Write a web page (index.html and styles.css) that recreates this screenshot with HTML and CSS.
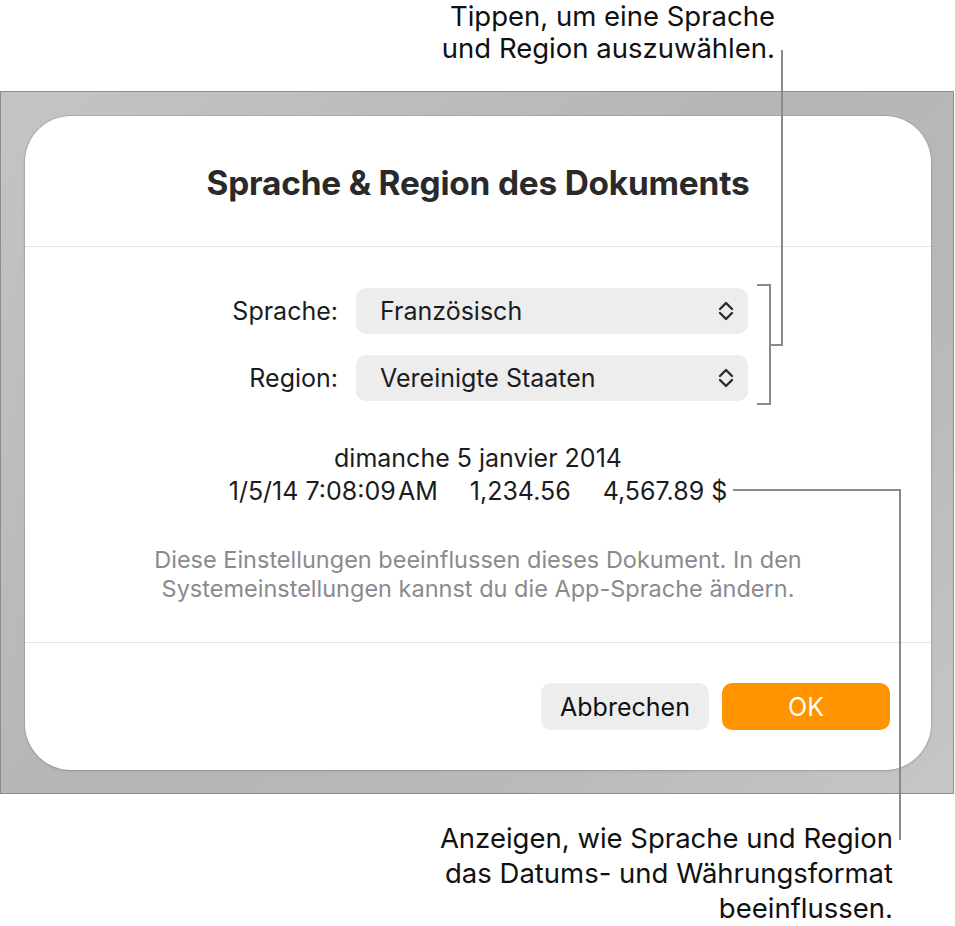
FILE: index.html
```html
<!DOCTYPE html>
<html lang="de">
<head>
    <meta charset="UTF-8" />
    <meta name="viewport" content="width=device-width, initial-scale=1.0" />
    <title>Sprache & Region des Dokuments</title>
    <link rel="stylesheet" href="styles.css">
</head>
<body>
    <div class="page">
        <div class="note note-top">
            <p>Tippen, um eine Sprache</p>
            <p>und Region auszuwählen.</p>
        </div>

        <div class="frame">
            <div class="dialog">
                <div class="dialog-head">
                    <h1>Sprache &amp; Region des Dokuments</h1>
                </div>
                <div class="dialog-body">
                    <div class="form">
                        <label>Sprache:</label>
                        <div class="select">
                            <span>Französisch</span>
                            <svg width="16" height="22" viewBox="0 0 16 22"><path d="M2 9 L8 3 L14 9 M2 13 L8 19 L14 13" fill="none" stroke="#2c2c2e" stroke-width="2.4" stroke-linecap="round" stroke-linejoin="round"/></svg>
                        </div>
                        <label>Region:</label>
                        <div class="select">
                            <span>Vereinigte Staaten</span>
                            <svg width="16" height="22" viewBox="0 0 16 22"><path d="M2 9 L8 3 L14 9 M2 13 L8 19 L14 13" fill="none" stroke="#2c2c2e" stroke-width="2.4" stroke-linecap="round" stroke-linejoin="round"/></svg>
                        </div>
                    </div>
                    <div class="preview">
                        <p>dimanche 5 janvier 2014</p>
                        <p class="numbers"><span>1/5/14 7:08:09&#8202;AM</span><span>1,234.56</span><span>4,567.89 $</span></p>
                    </div>
                    <p class="hint">Diese Einstellungen beeinflussen dieses Dokument. In den<br>Systemeinstellungen kannst du die App-Sprache ändern.</p>
                </div>
                <div class="dialog-foot">
                    <button class="btn">Abbrechen</button>
                    <button class="btn btn-ok">OK</button>
                </div>
            </div>
        </div>

        <div class="note note-bottom">
            <p>Anzeigen, wie Sprache und Region</p>
            <p>das Datums- und Währungsformat</p>
            <p>beeinflussen.</p>
        </div>

        <!-- leader lines -->
        <div class="line line-v1"></div>
        <div class="line line-h1"></div>
        <div class="bracket"></div>
        <div class="line line-h2"></div>
        <div class="line line-v2"></div>
    </div>
</body>
</html>
```

FILE: styles.css
```css
* {
    margin: 0;
    padding: 0;
    box-sizing: border-box;
}
body {
    font-family: Inter, "Noto Sans", sans-serif;
    background-color: white;
    color: #1c1c1e;
}
.page {
    position: relative;
    width: 955px;
    height: 926px;
}
.note {
    font-size: 27.5px;
    text-align: right;
    color: #111;
}
.note-top {
    height: 91px;
    padding-right: 180px;
    line-height: 32px;
}
.note-bottom {
    padding-top: 27px;
    padding-right: 62px;
    line-height: 35px;
}
.frame {
    height: 703px;
    width: 954px;
    border: 1px solid #8c8c8c;
    background: linear-gradient(135deg, #c4c4c4 0%, #b6b6b6 45%, #b8b8b8 70%, #c6c6c6 100%);
    padding: 24px 22px 23px 24px;
}
.dialog {
    height: 654px;
    background-color: white;
    border-radius: 46px;
    box-shadow: 0 0 0 1px rgba(0, 0, 0, 0.08), 0 1px 3px rgba(0, 0, 0, 0.12);
    display: flex;
    flex-direction: column;
}
.dialog-head {
    height: 131px;
    border-bottom: 1px solid #e4e4e4;
    display: flex;
    align-items: center;
    justify-content: center;
}
.dialog-head h1 {
    font-size: 33.4px;
    font-weight: 700;
    color: #2a2a2a;
    letter-spacing: -0.2px;
    padding-top: 4px;
}
.dialog-body {
    height: 396px;
    border-bottom: 1px solid #e4e4e4;
    padding-top: 41px;
}
.form {
    display: grid;
    grid-template-columns: 313px 392px;
    column-gap: 18px;
    row-gap: 21px;
    align-items: center;
}
.form label {
    text-align: right;
    font-size: 25px;
}
.select {
    height: 46px;
    background-color: #ededee;
    border-radius: 10px;
    display: flex;
    align-items: center;
    justify-content: space-between;
    padding: 0 14px 0 24px;
    font-size: 25px;
}
.preview {
    margin-top: 41px;
    text-align: center;
    font-size: 25px;
    line-height: 33px;
}
.numbers span {
    margin: 0 16px;
}
.hint {
    margin-top: 37px;
    text-align: center;
    font-size: 23.5px;
    line-height: 29px;
    color: #8a8a8e;
}
.dialog-foot {
    display: flex;
    justify-content: flex-end;
    gap: 13px;
    padding: 40px 41px 0 0;
}
.btn {
    height: 47px;
    width: 168px;
    border: none;
    border-radius: 10px;
    background-color: #ededee;
    font-family: Inter, "Noto Sans", sans-serif;
    font-size: 25px;
    color: #111;
}
.btn-ok {
    background-color: #ff9300;
    color: white;
}
.line, .bracket {
    position: absolute;
    background-color: #8a8a8a;
}
.line-v1 {
    left: 781px;
    top: 50px;
    width: 2px;
    height: 296px;
}
.line-h1 {
    left: 769px;
    top: 344px;
    width: 14px;
    height: 2px;
}
.bracket {
    left: 757px;
    top: 284px;
    width: 14px;
    height: 121px;
    background: transparent;
    border: 2px solid #8a8a8a;
    border-left: none;
}
.line-h2 {
    left: 733px;
    top: 489px;
    width: 168px;
    height: 2px;
}
.line-v2 {
    left: 899px;
    top: 489px;
    width: 2px;
    height: 351px;
}
```
